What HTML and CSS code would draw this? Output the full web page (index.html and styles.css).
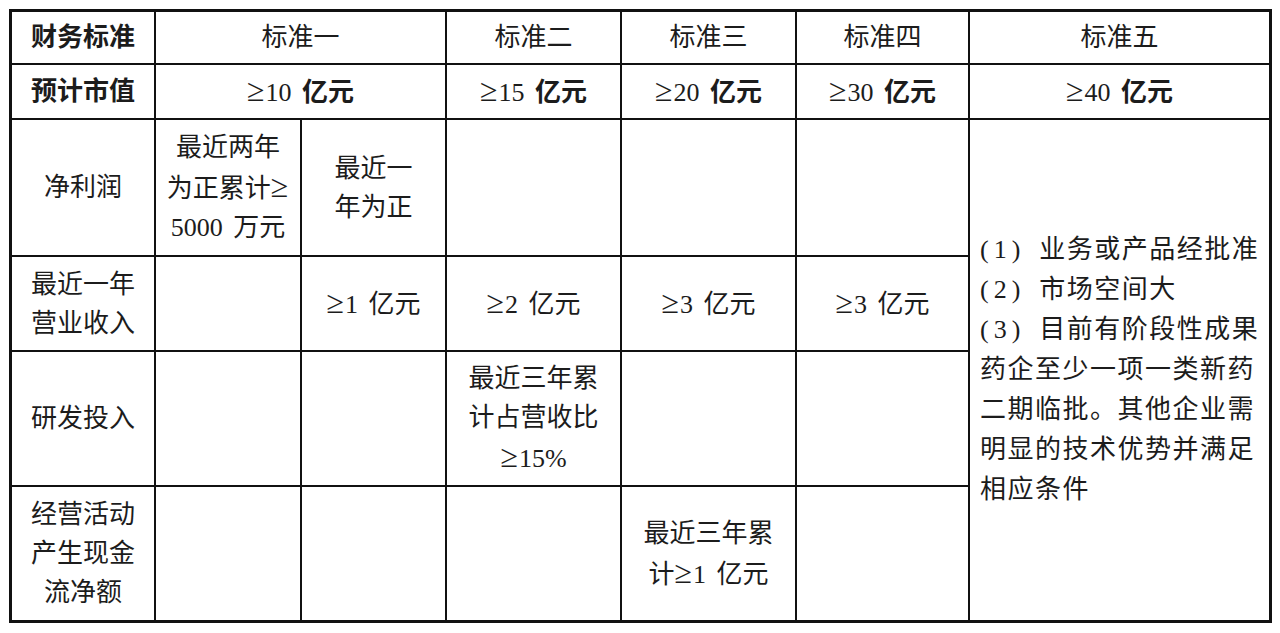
FILE: index.html
```html
<!DOCTYPE html>
<html lang="zh-CN">
<head>
<meta charset="utf-8">
<title>财务标准</title>
<link rel="stylesheet" href="styles.css">
</head>
<body>
<div class="grid">
  <div class="cell head"><p>财务标准</p></div>
  <div class="cell span2"><p>标准一</p></div>
  <div class="cell"><p>标准二</p></div>
  <div class="cell"><p>标准三</p></div>
  <div class="cell"><p>标准四</p></div>
  <div class="cell last"><p>标准五</p></div>

  <div class="cell head"><p>预计市值</p></div>
  <div class="cell span2"><p><span class="ge">≥</span>10 <b>亿元</b></p></div>
  <div class="cell"><p><span class="ge">≥</span>15 <b>亿元</b></p></div>
  <div class="cell"><p><span class="ge">≥</span>20 <b>亿元</b></p></div>
  <div class="cell"><p><span class="ge">≥</span>30 <b>亿元</b></p></div>
  <div class="cell last"><p><span class="ge">≥</span>40 <b>亿元</b></p></div>

  <div class="cell"><p>净利润</p></div>
  <div class="cell"><p>最近两年<br>为正累计<span class="ge">≥</span><br>5000 万元</p></div>
  <div class="cell"><p>最近一<br>年为正</p></div>
  <div class="cell"></div>
  <div class="cell"></div>
  <div class="cell"></div>
  <div class="cell last note">
    <p><span class="paren">(1)</span>业务或产品经批准<br><span class="paren">(2)</span>市场空间大<br><span class="paren">(3)</span>目前有阶段性成果<br>药企至少一项一类新药<br>二期临批。其他企业需<br>明显的技术优势并满足<br>相应条件</p>
  </div>

  <div class="cell"><p>最近一年<br>营业收入</p></div>
  <div class="cell"></div>
  <div class="cell"><p><span class="ge">≥</span>1 亿元</p></div>
  <div class="cell"><p><span class="ge">≥</span>2 亿元</p></div>
  <div class="cell"><p><span class="ge">≥</span>3 亿元</p></div>
  <div class="cell"><p><span class="ge">≥</span>3 亿元</p></div>

  <div class="cell"><p>研发投入</p></div>
  <div class="cell"></div>
  <div class="cell"></div>
  <div class="cell"><p>最近三年累<br>计占营收比<br><span class="ge">≥</span>15%</p></div>
  <div class="cell"></div>
  <div class="cell"></div>

  <div class="cell bottom"><p>经营活动<br>产生现金<br>流净额</p></div>
  <div class="cell bottom"></div>
  <div class="cell bottom"></div>
  <div class="cell bottom"></div>
  <div class="cell bottom"><p>最近三年累<br>计<span class="ge">≥</span>1 亿元</p></div>
  <div class="cell bottom"></div>
</div>
</body>
</html>
```

FILE: styles.css
```css
html, body {
  margin: 0;
  padding: 0;
  background: #ffffff;
}

body {
  padding: 9px 0 0 9px;
  font-family: "Liberation Serif", "Noto Sans CJK SC", serif;
  font-size: 26px;
  color: #1c1c1c;
}

.grid {
  display: inline-grid;
  grid-template-columns: 144px 146px 145px 175px 175px 173px 299px;
  grid-template-rows: 53px 55px 137px 95px 135px 133px;
  border: 3px solid #111;
}

.cell {
  box-sizing: border-box;
  border-right: 2px solid #111;
  border-bottom: 2px solid #111;
  display: flex;
  align-items: center;
  justify-content: center;
  text-align: center;
  overflow: hidden;
}

.cell p {
  margin: 0;
  line-height: 39px;
  word-spacing: 4px;
  white-space: nowrap;
}

.cell.last {
  border-right: none;
}

.cell.bottom {
  border-bottom: none;
}

.span2 {
  grid-column: span 2;
}

.head,
.cell b {
  font-weight: 700;
}

.ge {
  font-size: 32px;
  margin-right: 1px;
}

.note {
  grid-row: span 4;
  justify-content: flex-start;
  text-align: left;
  padding-left: 10px;
  border-bottom: none;
}

.note p {
  line-height: 40px;
  letter-spacing: 1.5px;
  word-spacing: 0;
}

.paren {
  letter-spacing: 5px;
  margin-right: 14px;
}
```
